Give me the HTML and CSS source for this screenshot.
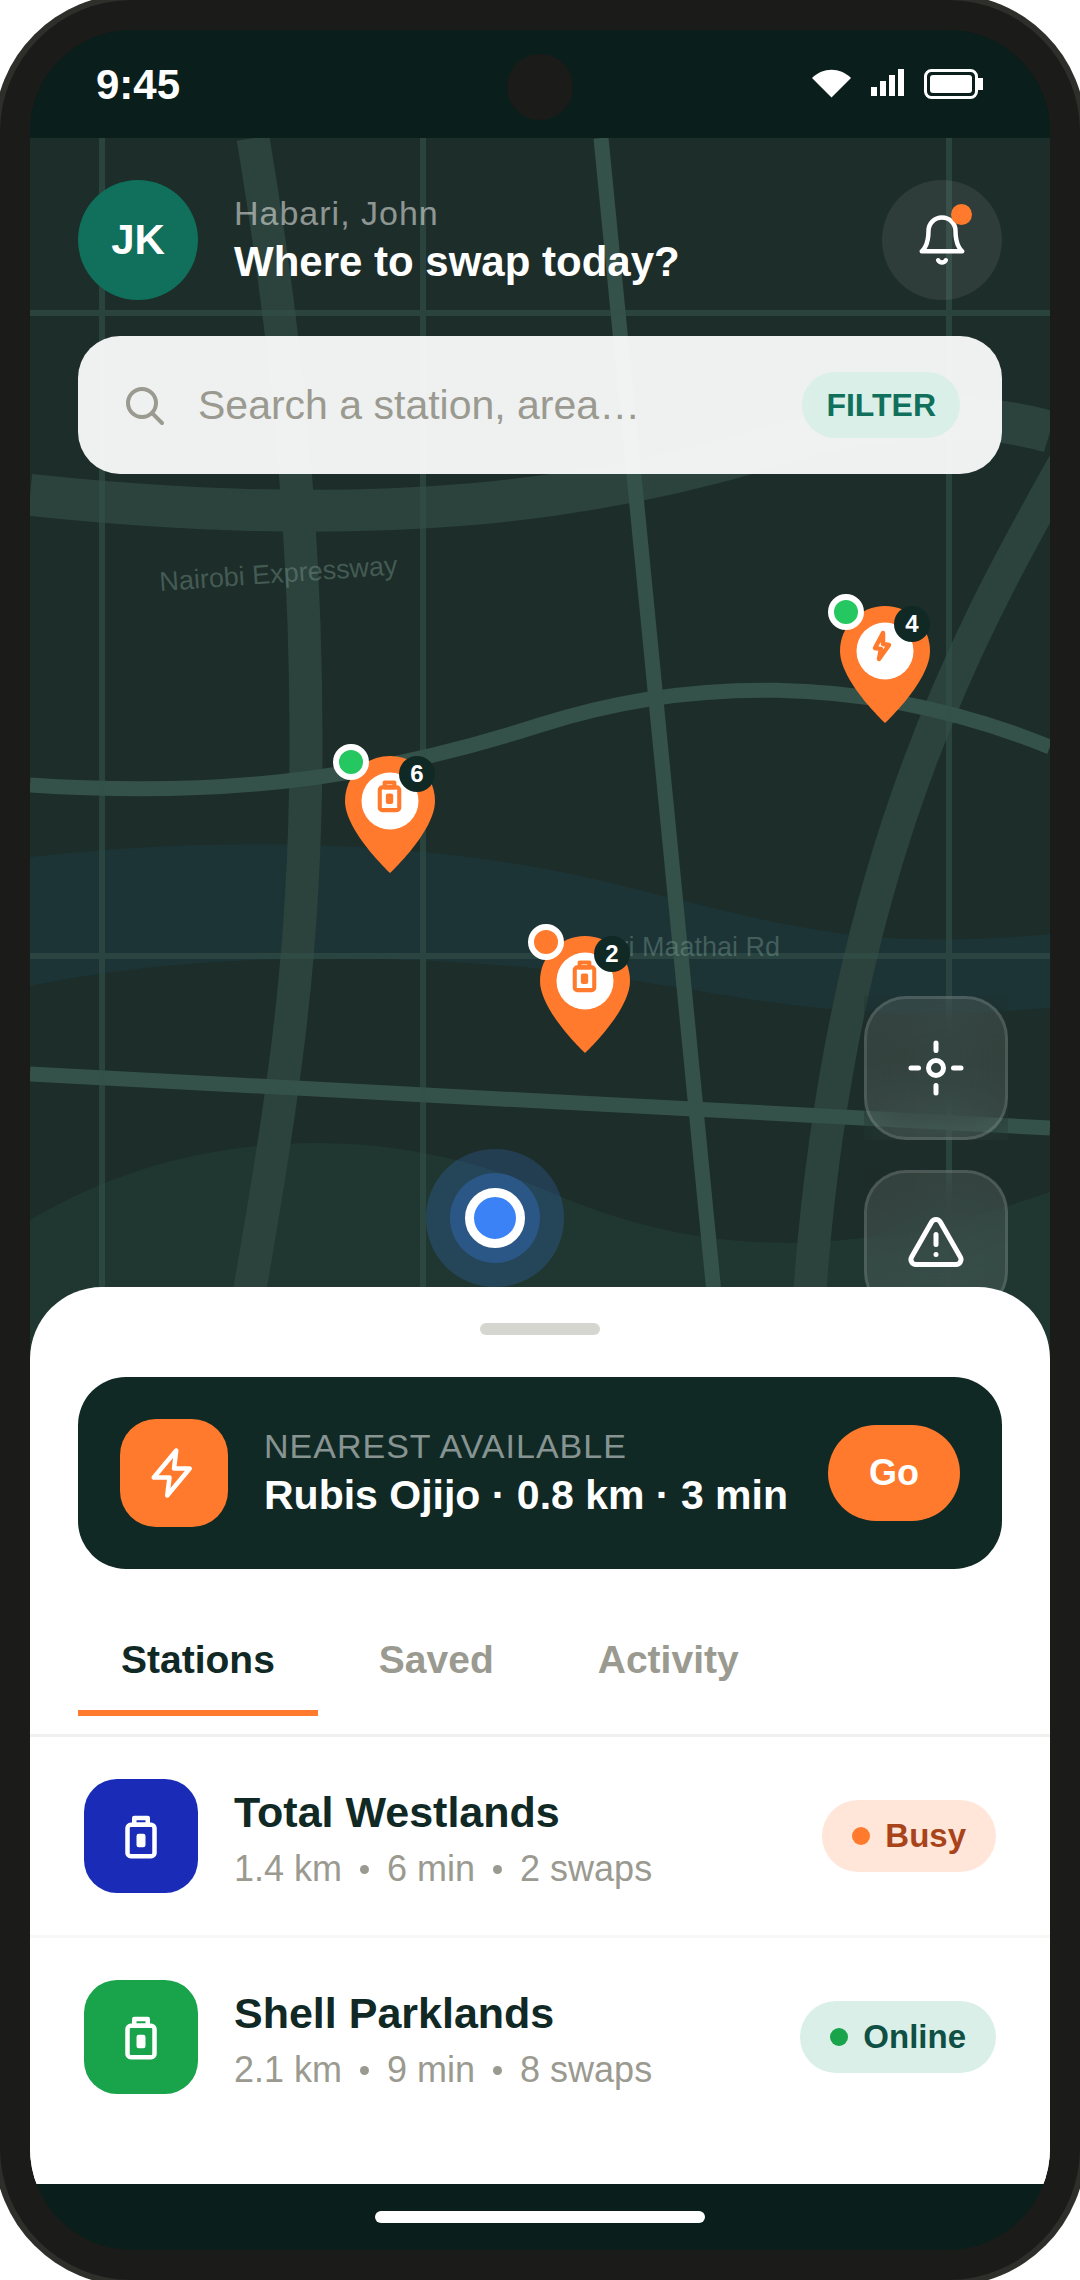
FILE: index.html
```html
<!DOCTYPE html>
<html lang="en">
<head>
<meta charset="utf-8">
<meta name="viewport" content="width=device-width, initial-scale=1">
<title>Battery swap stations</title>
<link rel="stylesheet" href="styles.css">
</head>
<body>
<svg class="symbols" aria-hidden="true">
  <symbol id="battery" viewBox="0 0 24 24">
    <rect x="6" y="7" width="12" height="14" rx="1.500"/>
    <rect x="9" y="4" width="6" height="3"/>
    <rect x="11" y="12" width="2" height="4"/>
  </symbol>
  <symbol id="pin" viewBox="0 0 90 117">
    <path d="M45 0C20 0 0 20 0 45C0 75 45 117 45 117S90 75 90 45C90 20 70 0 45 0Z" fill="#ff7a2c"/>
    <circle cx="45" cy="45" r="28.5" fill="#fff"/>
  </symbol>
</svg>

<div class="phone">
  <div class="screen">
    <div class="status-bar">
      <time class="clock">9:45</time>
      <span class="camera"></span>
      <div class="status-icons">
        <svg width="39" height="30" viewBox="0 0 39 30" fill="#fff"><path d="M0 9C11-2 28-2 39 9L19.500 28.500Z"/></svg>
        <svg width="33" height="30" viewBox="0 0 33 30" fill="#fff"><path d="M0 18h6v9H0zM9 12h6v15H9zM18 6h6v21h-6zM27 0h6v27h-6z"/></svg>
        <svg width="60" height="30" viewBox="0 0 60 30" fill="#fff"><rect x="1.500" y="1.500" width="51" height="27" rx="6" fill="none" stroke="#fff" stroke-width="3"/><rect x="6" y="6" width="42" height="18" rx="3"/><path d="M54 9h5v12h-5z"/></svg>
      </div>
    </div>

    <main class="app">
      <section class="map" aria-label="Map">
        <svg class="map-canvas" viewBox="30 138 1020 1233" preserveAspectRatio="xMidYMin slice" fill="none" aria-hidden="true">
          <path fill="#1c3436" d="M30 857C230 835 440 840 620 885S870 950 1050 934V1008C860 1022 790 1005 660 985C520 960 250 940 30 986Z"/>
          <path fill="#203731" d="M30 1220C190 1124 390 1122 545 1190C700 1258 850 1262 1050 1192V1380H30Z"/>
          <g stroke="#2c423c">
            <path stroke-width="42" d="M30 495C380 532 600 500 780 444C860 419 970 408 1050 432"/>
            <path stroke-width="33" d="M253 138C285 330 306 520 306 740S285 1090 235 1375"/>
            <path stroke-width="33" d="M1065 462C965 640 825 890 805 1375"/>
          </g>
          <g stroke="#34514a" stroke-width="15">
            <path d="M30 785C250 800 400 770 540 725C680 680 860 670 1050 747"/>
            <path d="M601 138L722 1375"/>
            <path d="M30 1074L1050 1128"/>
          </g>
          <path stroke="#34514a" stroke-opacity=".6" stroke-width="6" d="M102 138V1375M423 138V1375M949 138V1375M30 313H1050M30 956H1050"/>
          <g class="road-name">
            <text x="160" y="591" transform="rotate(-4 160 591)">Nairobi Expressway</text>
            <text x="535" y="956">Wangari Maathai Rd</text>
          </g>
        </svg>

        <header class="greeting">
          <span class="avatar">JK</span>
          <div class="greeting-text">
            <p class="eyebrow">Habari, John</p>
            <h1>Where to swap today?</h1>
          </div>
          <button class="bell" type="button" aria-label="Notifications">
            <svg width="54" height="54" viewBox="0 0 24 24" class="line-icon"><path d="M6 8a6 6 0 0 1 12 0c0 7 3 9 3 9H3s3-2 3-9"/><path d="M10.300 21a1.940 1.940 0 0 0 3.400 0"/></svg>
            <span class="bell-dot"></span>
          </button>
        </header>

        <form class="search">
          <svg width="48" height="48" viewBox="0 0 24 24" class="line-icon"><circle cx="11" cy="11" r="7"/><path d="m21 21-4.300-4.300"/></svg>
          <input type="text" aria-label="Search a station or area" placeholder="Search a station, area…">
          <button class="filter" type="button">FILTER</button>
        </form>

        <button class="pin pin-rubis" type="button" aria-label="Rubis Ojijo, 4 batteries">
          <svg width="90" height="117" viewBox="0 0 90 117"><use href="#pin"/><path d="M43 27L35 42L41 43L39 53L49 39L43 38Z" fill="none" stroke="#ff7a2c" stroke-width="4.500" stroke-linejoin="round"/></svg>
          <span class="pin-status online"></span><span class="pin-count">4</span>
        </button>
        <button class="pin pin-shell" type="button" aria-label="Shell Parklands, 6 batteries">
          <svg width="90" height="117" viewBox="0 0 90 117"><use href="#pin"/><use href="#battery" class="pin-glyph" x="25" y="20" width="39" height="39"/></svg>
          <span class="pin-status online"></span><span class="pin-count">6</span>
        </button>
        <button class="pin pin-total" type="button" aria-label="Total Westlands, 2 batteries">
          <svg width="90" height="117" viewBox="0 0 90 117"><use href="#pin"/><use href="#battery" class="pin-glyph" x="25" y="20" width="39" height="39"/></svg>
          <span class="pin-status busy"></span><span class="pin-count">2</span>
        </button>
        <span class="me"></span>

        <div class="map-tools">
          <div class="tool"><button type="button" aria-label="My location">
            <svg width="60" height="60" viewBox="0 0 24 24" class="line-icon"><circle cx="12" cy="12" r="3"/><path d="M12 2v3M12 19v3M2 12h3M19 12h3"/></svg>
          </button></div>
          <div class="tool"><button type="button" aria-label="Report a problem">
            <svg width="60" height="60" viewBox="0 0 24 24" class="line-icon"><path d="m21.730 18-8-14a2 2 0 0 0-3.480 0l-8 14A2 2 0 0 0 4 21h16a2 2 0 0 0 1.730-3M12 9v4M12 17h.01"/></svg>
          </button></div>
        </div>
      </section>

      <section class="sheet">
        <span class="handle"></span>
        <div class="nearest">
          <span class="nearest-icon"><svg width="54" height="54" viewBox="0 0 24 24" class="line-icon"><path d="M13 2L3 14h7l-1 8 10-12h-7l1-8z"/></svg></span>
          <div class="nearest-text">
            <p class="eyebrow">NEAREST AVAILABLE</p>
            <h2>Rubis Ojijo · 0.8 km · 3 min</h2>
          </div>
          <button class="go" type="button">Go</button>
        </div>

        <nav class="tabs" aria-label="Lists">
          <button class="tab active" type="button">Stations</button>
          <button class="tab" type="button">Saved</button>
          <button class="tab" type="button">Activity</button>
        </nav>

        <ul class="stations">
          <li class="station">
            <span class="tile total"><svg width="54" height="54" class="line-icon"><use href="#battery"/></svg></span>
            <div class="station-text">
              <h3>Total Westlands</h3>
              <p class="facts"><span>1.4 km</span><i></i><span>6 min</span><i></i><span>2 swaps</span></p>
            </div>
            <span class="badge busy">Busy</span>
          </li>
          <li class="station">
            <span class="tile shell"><svg width="54" height="54" class="line-icon"><use href="#battery"/></svg></span>
            <div class="station-text">
              <h3>Shell Parklands</h3>
              <p class="facts"><span>2.1 km</span><i></i><span>9 min</span><i></i><span>8 swaps</span></p>
            </div>
            <span class="badge online">Online</span>
          </li>
        </ul>
      </section>
    </main>

    <div class="home-bar"><span></span></div>
  </div>
</div>
</body>
</html>
```
FILE: styles.css
```css
:root {
  --ink: #102925;
  --bar: #0a1f1b;
  --frame: #1b1b19;
  --orange: #ff7a2c;
  --teal: #10705c;
  --mint: #d9efe8;
  --muted: #9a9a90;
}

* { box-sizing: border-box; margin: 0; padding: 0; }

html { overflow-x: hidden; }
body {
  background: #fff;
  font-family: "Liberation Sans", Arial, sans-serif;
  color: var(--ink);
}

button, input { font: inherit; border: 0; background: none; color: inherit; }
button { cursor: pointer; }
ul { list-style: none; }
.symbols { position: absolute; width: 0; height: 0; }

.line-icon {
  display: block;
  flex: none;
  fill: none;
  stroke: currentColor;
  stroke-width: 2;
  stroke-linecap: round;
  stroke-linejoin: round;
}

/* Device */
.phone {
  display: flex;
  min-height: 100vh;
  padding: 30px;
  border-radius: 132px;
  background: var(--frame);
  box-shadow: 0 0 0 6px #2e2e2a;
  overflow: hidden;
}
.screen {
  flex: 1;
  min-width: 0;
  display: flex;
  flex-direction: column;
  border-radius: 102px;
  background: var(--bar);
  overflow: hidden;
}
.status-bar {
  display: grid;
  grid-template-columns: 1fr auto 1fr;
  align-items: center;
  height: 108px;
  padding: 0 66px;
  background: var(--bar);
  color: #fff;
}
.clock { padding-top: 2px; font-size: 42px; font-weight: 700; line-height: 48px; }
.camera { width: 66px; height: 66px; margin-top: 6px; border-radius: 50%; background: var(--frame); }
.status-icons { display: flex; justify-content: flex-end; gap: 20px; }
.home-bar { display: flex; align-items: center; justify-content: center; height: 66px; }
.home-bar span { width: 330px; height: 12px; border-radius: 6px; background: #fff; }

.app { flex: 1; display: flex; flex-direction: column; background: #fff; }

/* Map */
.map {
  position: relative;
  flex: 1;
  min-height: 1000px;
  margin-bottom: -84px;
  padding: 42px 48px;
  background: #1d2d29;
  overflow: hidden;
}
.map-canvas { position: absolute; inset: 0; width: 100%; height: 100%; }
.road-name { fill: #8fb3a8; fill-opacity: .35; font-size: 27px; }

.greeting { position: relative; display: flex; align-items: center; gap: 36px; color: #fff; }
.avatar {
  display: grid;
  place-items: center;
  width: 120px;
  height: 120px;
  border-radius: 50%;
  background: var(--teal);
  font-size: 42px;
  font-weight: 700;
}
.greeting-text, .nearest-text, .station-text { flex: 1; min-width: 0; }
.greeting-text, .nearest-text { padding-bottom: 4px; }
.eyebrow { font-size: 34px; line-height: 48px; letter-spacing: 1px; color: rgba(255, 255, 255, .5); }
h1, h2 { font-size: 42px; line-height: 50px; white-space: nowrap; }
.bell {
  position: relative;
  display: grid;
  place-items: center;
  width: 120px;
  height: 120px;
  border-radius: 50%;
  background: rgba(255, 255, 255, .08);
  color: #fff;
}
.bell-dot { position: absolute; top: 24px; right: 30px; width: 21px; height: 21px; border-radius: 50%; background: var(--orange); }

.search {
  position: relative;
  display: flex;
  align-items: center;
  gap: 30px;
  height: 138px;
  margin-top: 36px;
  padding: 0 42px;
  border-radius: 42px;
  background: rgba(255, 255, 255, .93);
  color: var(--muted);
}
.search input { flex: 1; min-width: 0; height: 60px; font-size: 41px; outline: 0; }
.search input::placeholder { color: var(--muted); opacity: 1; }
.filter {
  height: 66px;
  padding: 0 24px;
  border-radius: 33px;
  background: var(--mint);
  color: var(--teal);
  font-size: 32px;
  font-weight: 700;
}

.pin { position: absolute; width: 90px; height: 117px; }
.pin svg { display: block; }
.pin-rubis { left: 810px; top: 468px; }
.pin-shell { left: 315px; top: 618px; }
.pin-total { left: 510px; top: 798px; }
.pin-glyph { fill: none; stroke: var(--orange); stroke-width: 2.5; stroke-linejoin: round; }
.pin-status { position: absolute; top: -12px; left: -12px; width: 36px; height: 36px; border: 6px solid #fff; border-radius: 50%; }
.pin-status.online { background: #25c760; }
.pin-status.busy { background: var(--orange); }
.pin-count {
  position: absolute;
  top: 0;
  right: 0;
  width: 36px;
  height: 36px;
  border-radius: 50%;
  background: var(--ink);
  color: #fff;
  font-size: 24px;
  font-weight: 700;
  line-height: 36px;
  text-align: center;
}
.me {
  position: absolute;
  left: 435px;
  top: 1050px;
  width: 60px;
  height: 60px;
  border: 9px solid #fff;
  border-radius: 50%;
  background: #3b82f6;
  box-shadow: 0 0 0 15px rgba(59, 130, 246, .3), 0 0 0 39px rgba(59, 130, 246, .2);
}

.map-tools { position: absolute; top: 858px; right: 42px; display: grid; gap: 30px; }
.tool { width: 144px; height: 144px; backdrop-filter: blur(24px); }
.tool button {
  display: grid;
  place-items: center;
  width: 100%;
  height: 100%;
  border: 3px solid rgba(255, 255, 255, .12);
  border-radius: 42px;
  background: rgba(255, 255, 255, .1);
  color: #fff;
}

/* Bottom sheet */
.sheet {
  position: relative;
  padding: 36px 0 48px;
  border-radius: 72px 72px 0 0;
  background: #fff;
}
.handle { display: block; width: 120px; height: 12px; margin: 0 auto; border-radius: 6px; background: #d6d6d0; }
.nearest {
  display: flex;
  align-items: center;
  gap: 36px;
  margin: 42px 48px 36px;
  padding: 42px;
  border-radius: 48px;
  background: var(--ink);
  color: #fff;
}
.nearest-icon {
  display: grid;
  place-items: center;
  width: 108px;
  height: 108px;
  border-radius: 36px;
  background: var(--orange);
}
.nearest h2 { font-size: 41px; }
.go {
  height: 96px;
  padding: 0 41px;
  border-radius: 48px;
  background: var(--orange);
  font-size: 36px;
  font-weight: 700;
}

.tabs { display: flex; gap: 18px; padding: 0 48px 18px; border-bottom: 3px solid #f0f0ee; }
.tab {
  height: 111px;
  padding: 4px 43px 0;
  border-bottom: 6px solid transparent;
  color: var(--muted);
  font-size: 39px;
  font-weight: 700;
}
.tab.active { border-color: var(--orange); color: var(--ink); }

.station { display: flex; align-items: center; gap: 36px; padding: 42px 54px; }
.station + .station { border-top: 3px solid #f7f7f6; }
.tile { display: grid; place-items: center; width: 114px; height: 114px; border-radius: 33px; color: #fff; }
.tile.total { background: #1a2bb8; }
.tile.shell { background: #19a34a; }
h3 { font-size: 43px; line-height: 66px; }
.facts { display: flex; align-items: center; gap: 18px; font-size: 36px; line-height: 48px; color: var(--muted); }
.facts i { width: 9px; height: 9px; border-radius: 50%; background: currentColor; }
.badge {
  display: flex;
  align-items: center;
  gap: 15px;
  height: 72px;
  padding: 0 30px;
  border-radius: 36px;
  font-size: 33px;
  font-weight: 700;
}
.badge::before { content: ""; width: 18px; height: 18px; border-radius: 50%; }
.badge.busy { background: #ffe6d9; color: #a8431a; }
.badge.busy::before { background: var(--orange); }
.badge.online { background: var(--mint); color: #0f4f44; }
.badge.online::before { background: #19a34a; }
```
